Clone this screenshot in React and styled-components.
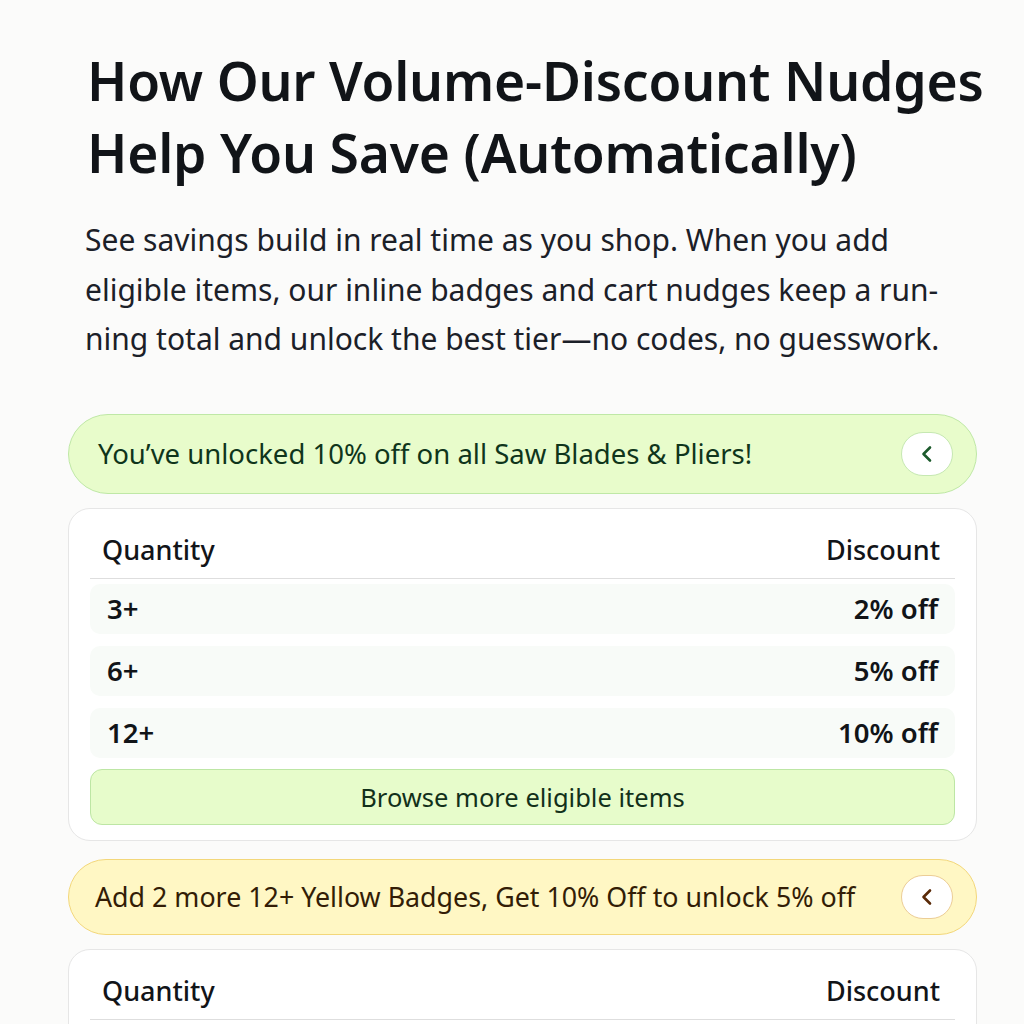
import React from "react";
import styled, { createGlobalStyle } from "styled-components";

const Global = createGlobalStyle`
  html, body { margin: 0; padding: 0; background: #fbfbfa; }
  body { font-family: "Noto Sans", "Open Sans", sans-serif; color: #12161b; }
  * { box-sizing: border-box; }
`;

const Page = styled.main`
  width: 1024px;
  padding: 45px 47px 0 68px;
  display: flex;
  flex-direction: column;
`;

const Intro = styled.header`
  padding: 0 0 0 19px;
  margin-bottom: 50px;
`;

const Title = styled.h1`
  margin: 0;
  font-size: 53.4px;
  line-height: 72px;
  font-weight: 600;
  letter-spacing: -0.2px;
  color: #111418;
  white-space: nowrap;
`;

const Lead = styled.p`
  margin: 26px 0 0 -2px;
  font-size: 30px;
  line-height: 49.5px;
  font-weight: 400;
  color: #1b2028;
  max-width: 862px;
`;

const Banner = styled.div`
  height: ${(p) => p.$h}px;
  border-radius: 40px;
  display: flex;
  align-items: center;
  justify-content: space-between;
  padding: 0 23px 0 ${(p) => p.$pl}px;
  background: ${(p) => (p.$tone === "green" ? "#e8fccb" : "#fff7c4")};
  border: 1.5px solid ${(p) => (p.$tone === "green" ? "#bfe8a6" : "#f3d77a")};
  color: ${(p) => (p.$tone === "green" ? "#0f351b" : "#331d06")};
  font-size: ${(p) => p.$fs}px;
`;

const BannerText = styled.span`
  font-weight: 400;
  white-space: nowrap;
`;

const Toggle = styled.button`
  flex: none;
  width: 52px;
  height: 44px;
  border-radius: 22px;
  background: #ffffff;
  border: 1.5px solid ${(p) => (p.$tone === "green" ? "#c6e8b2" : "#eccd96")};
  display: flex;
  align-items: center;
  justify-content: center;
  padding: 0;
  color: ${(p) => (p.$tone === "green" ? "#1c5a2c" : "#5a2a08")};
`;

const Card = styled.section`
  margin-top: 14px;
  background: #ffffff;
  border: 1.5px solid #e6e6e6;
  border-radius: 22px;
  padding: 12px 21px 15px 21px;
  display: flex;
  flex-direction: column;
`;

const HeadRow = styled.div`
  display: flex;
  justify-content: space-between;
  align-items: center;
  height: 58px;
  padding: 0 15px 0 12px;
  border-bottom: 1.5px solid #dedede;
  font-size: 27px;
  font-weight: 500;
  color: #121418;
`;

const Rows = styled.div`
  display: flex;
  flex-direction: column;
  gap: 12px;
  margin-top: 5px;
`;

const TierRow = styled.div`
  height: 50px;
  display: flex;
  justify-content: space-between;
  align-items: center;
  padding: 0 17px;
  border-radius: 10px;
  background: #f8fbf8;
  font-size: 27.5px;
  font-weight: 600;
  color: #111418;
`;

const Action = styled.button`
  margin-top: 11px;
  height: 56px;
  border-radius: 12px;
  background: #e7fccb;
  border: 1.5px solid #bde6a4;
  font-family: inherit;
  font-size: 25.5px;
  color: #12301a;
  cursor: pointer;
`;

const Spacer = styled.div`
  height: ${(p) => p.$h}px;
`;

const Chevron = () => (
  <svg width="16" height="18" viewBox="0 0 16 18" fill="none">
    <path d="M11 2.5 L4.5 9 L11 15.5" stroke="currentColor" strokeWidth="2.6" strokeLinecap="round" strokeLinejoin="round" />
  </svg>
);

const tiers = [
  ["3+", "2% off"],
  ["6+", "5% off"],
  ["12+", "10% off"],
];

export default function App() {
  return (
    <>
      <Global />
      <Page>
        <Intro>
          <Title>
            How Our Volume-Discount Nudges
            <br />
            Help You Save (Automatically)
          </Title>
          <Lead>
            See savings build in real time as you shop. When you add eligible items, our inline badges and cart nudges keep a run{"\u00AD"}ning total and unlock the best tier—no codes, no guesswork.
          </Lead>
        </Intro>

        <Banner $tone="green" $h={80} $pl={29} $fs={27.5}>
          <BannerText>You’ve unlocked 10% off on all Saw Blades &amp; Pliers!</BannerText>
          <Toggle $tone="green" aria-label="Collapse">
            <Chevron />
          </Toggle>
        </Banner>

        <Card>
          <HeadRow>
            <span>Quantity</span>
            <span>Discount</span>
          </HeadRow>
          <Rows>
            {tiers.map(([q, d]) => (
              <TierRow key={q}>
                <span>{q}</span>
                <span>{d}</span>
              </TierRow>
            ))}
          </Rows>
          <Action>Browse more eligible items</Action>
        </Card>

        <Spacer $h={18} />
        <Banner $tone="yellow" $h={76} $pl={26} $fs={26.8}>
          <BannerText>Add 2 more 12+ Yellow Badges, Get 10% Off to unlock 5% off</BannerText>
          <Toggle $tone="yellow" aria-label="Collapse">
            <Chevron />
          </Toggle>
        </Banner>

        <Card>
          <HeadRow>
            <span>Quantity</span>
            <span>Discount</span>
          </HeadRow>
          <Rows>
            {tiers.map(([q, d]) => (
              <TierRow key={q}>
                <span>{q}</span>
                <span>{d}</span>
              </TierRow>
            ))}
          </Rows>
        </Card>
      </Page>
    </>
  );
}
